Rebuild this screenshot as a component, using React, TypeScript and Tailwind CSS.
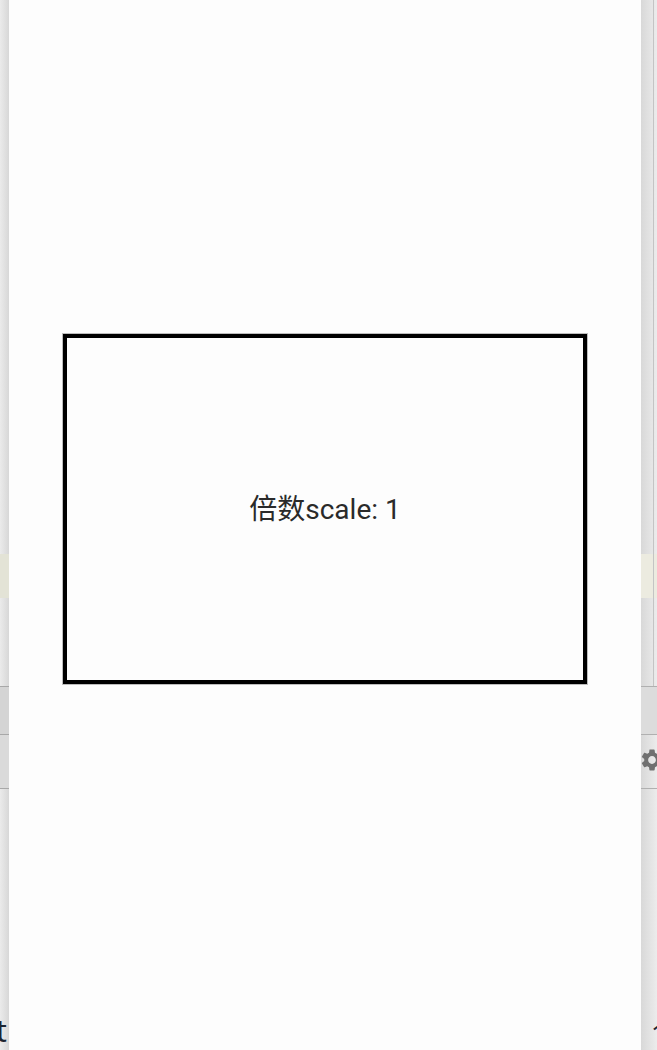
import React from "react";

export default function App() {
  return (
    <div
      className="flex h-[1050px] w-[657px] overflow-hidden bg-[#e4e4e4]"
      style={{ fontFamily: '"Noto Sans", "Noto Sans CJK SC", sans-serif' }}
    >
      {/* left strip of the page behind */}
      <div className="relative flex h-full w-[9px] shrink-0 flex-col overflow-hidden bg-gradient-to-r from-[#ebebeb] to-[#d7d7d7]">
        <div className="h-[554px]" />
        <div className="h-[44px] bg-[#e3e3d6]" />
        <div className="h-[88px]" />
        <div className="h-px bg-[#a8a8a8]" />
        <div className="h-[47px] bg-[#d4d4d4]" />
        <div className="h-px bg-[#a8a8a8]" />
        <div className="h-[53px] bg-[#dadada]" />
        <div className="h-px bg-[#a8a8a8]" />
        <div className="flex-1" />
        <span className="absolute left-[-4px] top-[1016px] text-[30px] leading-none text-[#1a2430]">t</span>
      </div>

      {/* modal panel */}
      <div className="h-full w-[632px] shrink-0 bg-[#fdfdfd] pl-[54px] pt-[334px]">
        <div className="flex h-[350px] w-[524px] items-center justify-center border-4 border-black ring-1 ring-[#bdbdbd]">
          <span
            className="pt-[2px] text-[28px] leading-none text-[#2a2a2a]"
            style={{ fontFamily: 'Roboto, "Noto Sans CJK SC", sans-serif' }}
          >
            倍数scale: 1
          </span>
        </div>
      </div>

      {/* right strip */}
      <div className="relative flex h-full flex-1 flex-col overflow-hidden bg-gradient-to-r from-[#d8d8d8] to-[#ececec]">
        <div className="absolute left-[12px] top-0 h-[686px] w-px bg-[#c4c4c4]" />
        <div className="h-[554px]" />
        <div className="h-[44px] bg-[#ecebe0]" />
        <div className="h-[88px]" />
        <div className="h-px bg-[#b0b0b0]" />
        <div className="h-[47px] bg-[#dcdcdc]" />
        <div className="h-px bg-[#b0b0b0]" />
        <div className="relative h-[53px]">
          <svg
            className="absolute left-[-2px] top-[12px]"
            width="26"
            height="26"
            viewBox="0 0 24 24"
            fill="#707070"
          >
            <path d="M19.14 12.94c.04-.3.06-.61.06-.94 0-.32-.02-.64-.07-.94l2.03-1.58a.49.49 0 0 0 .12-.61l-1.920-3.32a.488.488 0 0 0-.59-.22l-2.39.96c-.5-.38-1.03-.7-1.62-.94l-.36-2.54a.484.484 0 0 0-.48-.41h-3.84c-.24 0-.43.17-.47.41l-.36 2.54c-.59.24-1.130.57-1.62.94l-2.39-.96c-.22-.08-.47 0-.59.22L2.74 8.87c-.12.21-.08.47.12.61l2.030 1.58c-.05.3-.09.63-.09.94s.02.64.07.94l-2.03 1.58a.49.49 0 0 0-.12.61l1.92 3.32c.12.22.37.29.59.22l2.39-.96c.5.38 1.03.7 1.62.94l.36 2.54c.05.24.24.41.48.41h3.84c.24 0 .44-.17.47-.41l.36-2.54c.59-.24 1.13-.56 1.62-.94l2.39.96c.22.08.47 0 .59-.22l1.92-3.32c.12-.22.07-.47-.12-.61l-2.01-1.58zM12 15.6c-1.98 0-3.6-1.62-3.6-3.6s1.62-3.6 3.6-3.6 3.6 1.620 3.6 3.6-1.62 3.6-3.6 3.6z" />
          </svg>
        </div>
        <div className="h-px bg-[#b0b0b0]" />
        <div className="flex-1" />
        <span className="absolute left-[10px] top-[1020px] text-[26px] leading-none text-[#1a2430]">1</span>
      </div>
    </div>
  );
}
